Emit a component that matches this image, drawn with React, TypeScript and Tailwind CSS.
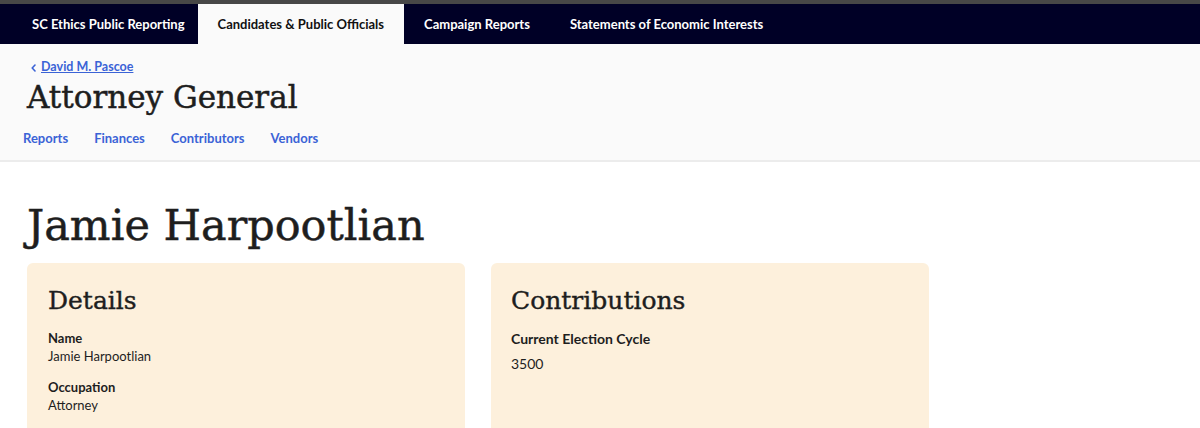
import React from "react";

export default function App() {
  return (
    <div className="w-[1200px] h-[428px] overflow-hidden bg-white font-['Lato','Noto_Sans',sans-serif]">
      <div className="h-[4px] bg-[#474747]" />
      <nav className="h-[40px] bg-[#000026] flex items-stretch pl-[12px] text-[13px] font-bold">
        <a className="flex items-center pt-[2px] pl-[20px] pr-[13px] text-white">SC Ethics Public Reporting</a>
        <a className="flex items-center pt-[2px] px-[20px] bg-[#fafafa] text-[#111]">Candidates &amp; Public Officials</a>
        <a className="flex items-center pt-[2px] px-[20px] text-white">Campaign Reports</a>
        <a className="flex items-center pt-[2px] px-[20px] text-white">Statements of Economic Interests</a>
      </nav>
      <header className="h-[118px] bg-[#fafafa] border-b-2 border-[#ececec] pl-[23px]">
        <div className="pt-[14px] pl-[8px] flex items-center gap-[5px] text-[12.5px] font-bold text-[#3b63d6] leading-[18px]">
          <svg width="5" height="8" viewBox="0 0 5 8" className="mt-[1px]">
            <path d="M4 1 L1.2 4 L4 7" fill="none" stroke="#3b63d6" strokeWidth="1.6" strokeLinecap="round" strokeLinejoin="round" />
          </svg>
          <a className="underline">David M. Pascoe</a>
        </div>
        <h1 className="pl-[4px] mt-[1px] font-['DejaVu_Serif',serif] text-[31px] leading-[40px] text-[#1e1e1e] [-webkit-text-stroke:0.5px_#1e1e1e]">
          Attorney General
        </h1>
        <div className="mt-[12px] flex gap-[26px] text-[13px] font-bold text-[#3b63d6] leading-[18px]">
          <a>Reports</a>
          <a>Finances</a>
          <a>Contributors</a>
          <a>Vendors</a>
        </div>
      </header>
      <main className="pl-[24px]">
        <h1 className="mt-[36px] pl-[3px] font-['DejaVu_Serif',serif] text-[43px] leading-[54px] text-[#1e1e1e] [-webkit-text-stroke:0.5px_#1e1e1e]">
          Jamie Harpootlian
        </h1>
        <div className="mt-[11px] pl-[3px] flex gap-[26px]">
          <section className="w-[438px] h-[200px] rounded-[6px] bg-[#fdf0dc] px-[21px] pt-[22px] text-[#1e1e1e]">
            <h2 className="font-['DejaVu_Serif',serif] text-[25px] leading-[32px] [-webkit-text-stroke:0.4px_#1e1e1e]">Details</h2>
            <div className="mt-[12px] text-[13px] leading-[18px]">
              <div className="font-bold">Name</div>
              <div>Jamie Harpootlian</div>
              <div className="font-bold mt-[13px]">Occupation</div>
              <div>Attorney</div>
            </div>
          </section>
          <section className="w-[438px] h-[200px] rounded-[6px] bg-[#fdf0dc] px-[20px] pt-[22px] text-[#1e1e1e]">
            <h2 className="font-['DejaVu_Serif',serif] text-[25px] leading-[32px] [-webkit-text-stroke:0.4px_#1e1e1e]">Contributions</h2>
            <div className="mt-[12px] text-[14px] leading-[20px]">
              <div className="font-bold">Current Election Cycle</div>
              <div className="mt-[5px]">3500</div>
            </div>
          </section>
        </div>
      </main>
    </div>
  );
}
